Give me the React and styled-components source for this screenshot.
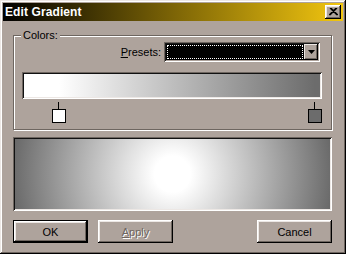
import React from "react";
import styled, { createGlobalStyle } from "styled-components";

const FACE = "#aea39c";
const LIGHT = "#ece7e4";
const SHADOW = "#6e6660";

const stops = [
  { pos: 0.118, color: "#ffffff" },
  { pos: 0.983, color: "#6c6c6c" }
];

const GlobalStyle = createGlobalStyle`
  html, body {
    margin: 0;
    padding: 0;
    background: ${FACE};
  }
  body {
    font-family: "Liberation Sans", Arial, sans-serif;
    font-size: 11px;
    color: #000;
  }
`;

const Window = styled.div`
  width: 346px;
  height: 254px;
  box-sizing: border-box;
  padding: 3px;
  background: ${FACE};
  box-shadow: inset -1px -1px 0 #000, inset 1px 1px 0 ${LIGHT},
    inset -2px -2px 0 ${SHADOW}, inset 2px 2px 0 #fff;
  display: flex;
  flex-direction: column;
`;

const TitleBar = styled.div`
  height: 18px;
  display: flex;
  align-items: center;
  justify-content: space-between;
  padding: 0 2px;
  background: linear-gradient(to right, #000000 0%, #7c6406 50%, #f2c610 100%);
`;

const Title = styled.span`
  color: #fff;
  font-weight: bold;
  font-size: 12px;
  letter-spacing: 0.1px;
`;

const CloseButton = styled.div`
  width: 16px;
  height: 14px;
  box-sizing: border-box;
  background: ${FACE};
  box-shadow: inset -1px -1px 0 #000, inset 1px 1px 0 #fff,
    inset -2px -2px 0 ${SHADOW}, inset 2px 2px 0 ${LIGHT};
  display: flex;
  align-items: center;
  justify-content: center;
`;

const Content = styled.div`
  flex: 1;
  display: flex;
  flex-direction: column;
  padding: 14px 11px 0 10px;
`;

const GroupBox = styled.div`
  position: relative;
  height: 95px;
  box-sizing: border-box;
  border: 1px solid ${SHADOW};
  box-shadow: inset 1px 1px 0 #fff, 1px 1px 0 #fff;
  padding: 6px 9px 0 8px;
  display: flex;
  flex-direction: column;
`;

const Legend = styled.span`
  position: absolute;
  top: -6px;
  left: 7px;
  padding: 0 2px;
  background: ${FACE};
  line-height: 11px;
`;

const PresetsRow = styled.div`
  display: flex;
  justify-content: flex-end;
  align-items: center;
  gap: 3px;
  padding-right: 2px;
`;

const Mnemonic = styled.span`
  text-decoration: underline;
`;

const Combo = styled.div`
  width: 156px;
  height: 20px;
  box-sizing: border-box;
  padding: 2px;
  display: flex;
  background: #000;
  box-shadow: inset 1px 1px 0 ${SHADOW}, inset -1px -1px 0 #fff,
    inset 2px 2px 0 #1a1a1a, inset -2px -2px 0 ${FACE};
`;

const ComboField = styled.div`
  flex: 1;
  margin: 1px;
  border: 1px dotted #fff;
  background: #000;
`;

const ComboButton = styled.div`
  width: 14px;
  box-sizing: border-box;
  background: ${FACE};
  box-shadow: inset -1px -1px 0 #000, inset 1px 1px 0 ${LIGHT},
    inset -2px -2px 0 ${SHADOW};
  display: flex;
  align-items: center;
  justify-content: center;
`;

const Sunken = styled.div`
  box-sizing: border-box;
  padding: 2px;
  box-shadow: inset 1px 1px 0 ${SHADOW}, inset -1px -1px 0 #fff,
    inset 2px 2px 0 #111, inset -2px -2px 0 ${LIGHT};
  background: ${FACE};
`;

const GradientBar = styled(Sunken)`
  margin-top: 10px;
  height: 27px;
`;

const GradientFill = styled.div`
  height: 100%;
  background: ${(p) => p.$fill};
`;

const MarkerTrack = styled.div`
  position: relative;
  margin-top: 3px;
  height: 21px;
`;

const Marker = styled.div`
  position: absolute;
  top: 0;
  width: 14px;
  height: 21px;
  display: flex;
  flex-direction: column;
  align-items: center;
`;

const Stem = styled.div`
  width: 1px;
  height: 7px;
  background: #000;
`;

const Swatch = styled.div`
  width: 14px;
  height: 14px;
  box-sizing: border-box;
  border: 1px solid #000;
  background: ${(p) => p.$color};
`;

const Preview = styled(Sunken)`
  margin-top: 7px;
  height: 74px;
`;

const PreviewFill = styled.div`
  height: 100%;
  background: radial-gradient(
    circle 160px at 50% 50%,
    #ffffff 0px,
    #ffffff 18px,
    #6a6a6a 160px
  );
`;

const ButtonRow = styled.div`
  margin-top: 9px;
  display: flex;
  gap: 10px;
`;

const Button = styled.div`
  width: 75px;
  height: 23px;
  box-sizing: border-box;
  display: flex;
  align-items: center;
  justify-content: center;
  background: ${FACE};
  color: ${(p) => (p.$disabled ? SHADOW : "#000")};
  text-shadow: ${(p) => (p.$disabled ? "1px 1px 0 #fff" : "none")};
  border: ${(p) => (p.$default ? "1px solid #000" : "0")};
  box-shadow: inset -1px -1px 0 #000, inset 1px 1px 0 #fff,
    inset -2px -2px 0 ${SHADOW}, inset 2px 2px 0 ${LIGHT};
  margin-left: ${(p) => (p.$push ? "auto" : "0")};
  padding-top: 1px;
`;

const linearFill = `linear-gradient(to right, ${stops
  .map((s) => `${s.color} ${(s.pos * 100).toFixed(1)}%`)
  .join(", ")})`;

export default function App() {
  return (
    <>
      <GlobalStyle />
      <Window>
        <TitleBar>
          <Title>Edit Gradient</Title>
          <CloseButton>
            <svg width="9" height="8" viewBox="0 0 9 8">
              <path d="M1 0 L8 7 M8 0 L1 7 M2 0 L9 7 M7 0 L0 7" stroke="#000" strokeWidth="1.1" />
            </svg>
          </CloseButton>
        </TitleBar>
        <Content>
          <GroupBox>
            <Legend>Colors:</Legend>
            <PresetsRow>
              <span>
                <Mnemonic>P</Mnemonic>resets:
              </span>
              <Combo>
                <ComboField />
                <ComboButton>
                  <svg width="7" height="4" viewBox="0 0 7 4">
                    <path d="M0 0 H7 L3.5 4 Z" fill="#000" />
                  </svg>
                </ComboButton>
              </Combo>
            </PresetsRow>
            <GradientBar>
              <GradientFill $fill={linearFill} />
            </GradientBar>
            <MarkerTrack>
              {stops.map((s, i) => (
                <Marker key={i} style={{ left: `${2 + s.pos * 296 - 7}px` }}>
                  <Stem />
                  <Swatch $color={s.color} />
                </Marker>
              ))}
            </MarkerTrack>
          </GroupBox>
          <Preview>
            <PreviewFill />
          </Preview>
          <ButtonRow>
            <Button $default>OK</Button>
            <Button $disabled>
              <span>
                <Mnemonic>A</Mnemonic>pply
              </span>
            </Button>
            <Button $push>Cancel</Button>
          </ButtonRow>
        </Content>
      </Window>
    </>
  );
}
